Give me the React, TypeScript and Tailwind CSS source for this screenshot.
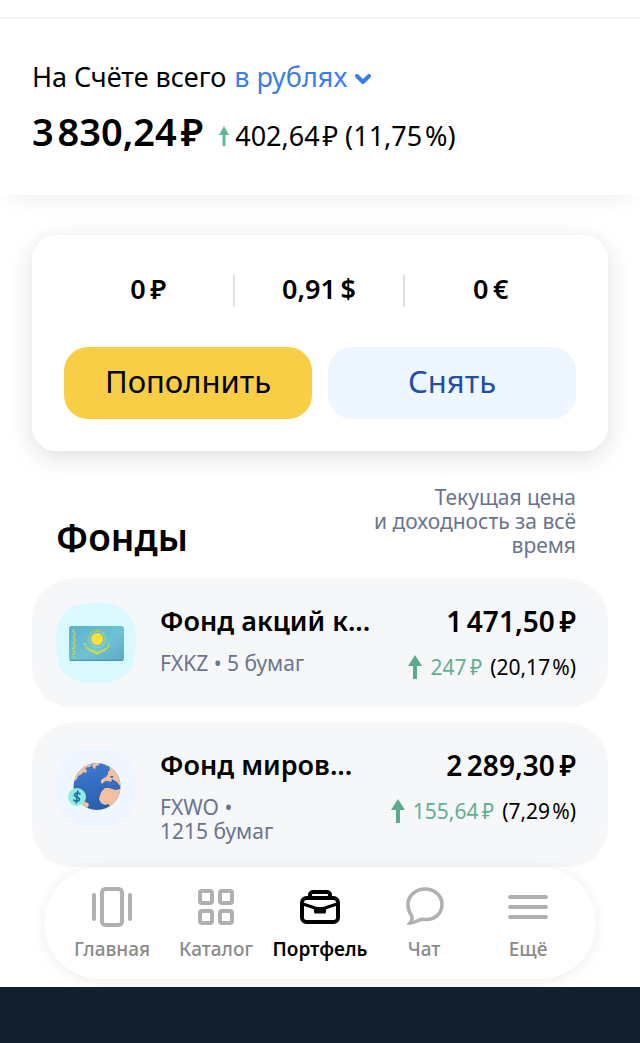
import { ReactNode, useState } from "react";
import clsx from "clsx";

type Fund = {
  name: string;
  ticker: string;
  amount: string;
  price: string;
  profit: string;
  percent: string;
  icon: ReactNode;
};

const ArrowUp = ({ className }: { className?: string }) => (
  <svg viewBox="0 0 14 24" fill="currentColor" className={className}>
    <path d="M7 0 14 11H9V24H5V11H0Z" />
  </svg>
);

const ArrowUpThin = ({ className }: { className?: string }) => (
  <svg viewBox="0 0 10 20" fill="currentColor" className={className}>
    <path d="M5 0 10 9H6.500V20H3.500V9H0Z" />
  </svg>
);

const FlagIcon = () => (
  <svg viewBox="0 0 80 80" className="h-20 w-20 shrink-0">
    <defs>
      <linearGradient id="flag" x1="0" y1="0" x2="1" y2="1">
        <stop offset="0" stopColor="#5cb0c8" />
        <stop offset="0.55" stopColor="#6fc2d5" />
        <stop offset="1" stopColor="#5aaac4" />
      </linearGradient>
    </defs>
    <path
      d="M40 0C69 0 80 11 80 40S69 80 40 80 0 69 0 40 11 0 40 0Z"
      fill="#d9f9ff"
    />
    <rect x="13" y="23" width="55" height="35" rx="2.5" fill="url(#flag)" />
    <path d="M14 57.4h53" stroke="#4b91ad" strokeWidth="1" />
    <path
      d="M18 26v29M16.5 28l3 3-3 3 3 3-3 3 3 3-3 3 3 3-3 3"
      stroke="#c6d94a"
      strokeWidth="1.2"
      strokeDasharray="2 1"
      fill="none"
    />
    <circle
      cx="41"
      cy="36"
      r="8.3"
      fill="none"
      stroke="#c3d957"
      strokeWidth="2.2"
      strokeDasharray="0.8 1.2"
    />
    <circle cx="41" cy="36" r="6" fill="#fce034" />
    <path
      d="M29 40c0 5 4 7 8 7.5 2 .2 3 1.500 4 3 1-1.500 2-2.800 4-3 4-.5 8-2.500 8-7.500M31 45c4 4 7 4 10 6 3-2 6-2 10-6"
      fill="none"
      stroke="#d5dc3f"
      strokeWidth="1.5"
      strokeDasharray="3 0.7"
    />
  </svg>
);

const GlobeIcon = () => (
  <svg viewBox="0 0 80 80" className="h-20 w-20 shrink-0">
    <defs>
      <linearGradient id="ocean" x1="0.3" y1="0" x2="0.6" y2="1">
        <stop offset="0" stopColor="#3d7bd2" />
        <stop offset="1" stopColor="#2b5da9" />
      </linearGradient>
      <clipPath id="globe">
        <circle cx="41" cy="39.500" r="23.500" />
      </clipPath>
    </defs>
    <path
      d="M40 0C69 0 80 11 80 40S69 80 40 80 0 69 0 40 11 0 40 0Z"
      fill="#eff6ff"
    />
    <circle cx="41" cy="39.500" r="23.500" fill="url(#ocean)" />
    <g clipPath="url(#globe)" fill="#f4c1a0">
      <path d="M14 38 21 32l1-3 4-2 1-2 3 1 1-3-2-1 2-2 3 0 2-3-4-3H22L13 26Z" />
      <path d="m36 18 4-3 4 0-1 3-3 1-1 3-2-1Z" />
      <path d="m48 15 2 4 3 0 1 4-2 2 0 3-3 0-1 3-3 2 0 3 3 1 3-3 4 1 1-3 5 3 3 4 0 3-4 1-4-1-3-1-4 0-3 3-2 4-1 4 2 4 4 2 3-1 2 2 0 3 1 3-1 4 2 4 8-2 9-13 2-19-7-14-10-8Z" />
      <path d="m27 54 5 2 1 2-3 5-5-4Z" />
      <path d="m47 36 2-2 3 0 3 2 4-1 1 3-5 0-2 1-3-2-3 0Z" fill="#3973c7" />
      <path d="m48 25 2 0 1 4-2 2-2-3ZM54 29l3 0 0 2-2 0Z" fill="#3973c7" />
    </g>
    <circle cx="21" cy="50" r="9" fill="#8fede1" />
    <path
      d="M24 47c-1-1.300-5-1.500-5.500.6-.5 2.700 5.300 2.200 5 4.900-.3 2.300-4.600 2-5.800.5M21.700 44 20.300 56"
      fill="none"
      stroke="#2467a5"
      strokeWidth="1.600"
      strokeLinecap="round"
    />
  </svg>
);

const HomeIcon = () => (
  <>
    <rect x="10" y="2" width="20" height="36" rx="3.500" />
    <path d="M2 8v24M38 8v24" />
  </>
);

const CatalogIcon = () => (
  <>
    <rect x="4" y="4" width="12" height="12" rx="2" />
    <rect x="24" y="4" width="12" height="12" rx="2" />
    <rect x="4" y="24" width="12" height="12" rx="2" />
    <rect x="24" y="24" width="12" height="12" rx="2" />
  </>
);

const PortfolioIcon = () => (
  <>
    <path d="M10 10V8a3 3 0 0 1 3-3h14a3 3 0 0 1 3 3v2" />
    <rect x="2" y="11" width="36" height="24" rx="4.500" />
    <path d="m3 17 12 4q5 1.500 10 0l12-4" strokeWidth="3" />
    <path
      d="M14 20.500h12V25a1.500 1.500 0 0 1-1.500 1.500h-9A1.500 1.500 0 0 1 14 25Z"
      fill="currentColor"
      stroke="none"
    />
  </>
);

const ChatIcon = () => (
  <path
    d="M21 2C30.500 2 38 8.500 38 17.500S31 32.500 22 32.500c-2 0-3-.5-5 0-3 .8-6 3-11 3.500 2-3 3-5 1.500-7.500C5 25 4 21.500 4 17.500 4 8.500 12 2 21 2Z"
    strokeWidth="3.500"
    strokeLinejoin="miter"
  />
);

const MenuIcon = () => <path d="M2 10h36M2 20h36M2 30h36" />;

const balances = ["0\u2009₽", "0,91\u2009$", "0\u2009€"];

const funds: Fund[] = [
  {
    name: "Фонд акций к...",
    ticker: "FXKZ •",
    amount: "5 бумаг",
    price: "1\u2009471,50\u2009₽",
    profit: "247\u2009₽",
    percent: "(20,17\u200A%)",
    icon: <FlagIcon />,
  },
  {
    name: "Фонд миров...",
    ticker: "FXWO •",
    amount: "1215 бумаг",
    price: "2\u2009289,30\u2009₽",
    profit: "155,64\u2009₽",
    percent: "(7,29\u200A%)",
    icon: <GlobeIcon />,
  },
];

const tabs = [
  { label: "Главная", icon: <HomeIcon /> },
  { label: "Каталог", icon: <CatalogIcon /> },
  { label: "Портфель", icon: <PortfolioIcon /> },
  { label: "Чат", icon: <ChatIcon /> },
  { label: "Ещё", icon: <MenuIcon /> },
];

const Header = () => (
  <header className="border-t-2 border-[#f4f4f4] bg-white px-8 py-10 shadow-[0_16px_20px_-12px_rgba(0,0,0,0.07)]">
    <div className="flex items-center gap-2 text-[27px] leading-9">
      <span>На Счёте всего</span>
      <button className="flex cursor-pointer items-center gap-2 text-[#3b7de9]">
        в рублях
        <svg
          viewBox="0 0 16 10"
          className="mt-1 h-[10px] w-4"
          fill="none"
          stroke="currentColor"
          strokeWidth="4"
          strokeLinecap="round"
          strokeLinejoin="round"
        >
          <path d="m2 2 6 6 6-6" />
        </svg>
      </button>
    </div>
    <div className="mt-3 flex h-12 items-baseline leading-12">
      <span className="text-[38px] font-semibold">
        3{"\u200A"}830,24{"\u200A"}₽
      </span>
      <ArrowUpThin className="ml-4 h-5 w-[10px] text-[#5fb896]" />
      <span className="ml-1.5 text-[27px]">
        402,64{"\u200A"}₽ (11,75{"\u200A"}%)
      </span>
    </div>
  </header>
);

const BalanceCard = () => (
  <section className="mx-8 mt-10 rounded-3xl bg-white px-8 pt-10 pb-8 shadow-[0_6px_24px_rgba(0,0,0,0.13)]">
    <div className="grid grid-cols-3 divide-x-2 divide-[#dce1e6]">
      {balances.map((item) => (
        <div
          key={item}
          className="pb-1 text-center text-[27px] leading-7 font-semibold"
        >
          {item}
        </div>
      ))}
    </div>
    <div className="mt-10 grid grid-cols-2 gap-4 text-[31px]">
      <button className="h-18 cursor-pointer rounded-3xl bg-[#f7ce46] pb-1">
        Пополнить
      </button>
      <button className="h-18 cursor-pointer rounded-3xl bg-[#eef6ff] pb-1 text-[#2350a5]">
        Снять
      </button>
    </div>
  </section>
);

const FundCard = ({ fund }: { fund: Fund }) => (
  <li className="flex items-start rounded-[40px] bg-[#f6f7f9] py-6 pr-8 pl-6">
    {fund.icon}
    <div className="ml-6 min-w-0 flex-1">
      <h3 className="truncate text-[27px] leading-9 font-semibold">
        {fund.name}
      </h3>
      <p className="mt-3 max-w-40 text-[21px] leading-6 text-[#69758c]">
        {fund.ticker} <span className="inline-block">{fund.amount}</span>
      </p>
    </div>
    <div className="shrink-0 text-right">
      <p className="text-[28px] leading-9 font-semibold">{fund.price}</p>
      <p className="mt-4 flex items-center justify-end gap-2 text-[21px] leading-6">
        <ArrowUp className="h-6 w-[14px] text-[#5caa8d]" />
        <span className="text-[#5fb092]">{fund.profit}</span>
        <span>{fund.percent}</span>
      </p>
    </div>
  </li>
);

const TabBar = () => {
  const [active, setActive] = useState("Портфель");

  return (
    <nav className="mx-11 mb-2 grid grid-cols-5 rounded-full bg-white px-4 pt-5 pb-[18px] shadow-[0_2px_16px_rgba(0,0,0,0.07)]">
      {tabs.map(({ label, icon }) => (
        <button
          key={label}
          onClick={() => setActive(label)}
          className="flex cursor-pointer flex-col items-center"
        >
          <svg
            viewBox="0 0 40 40"
            fill="none"
            stroke="currentColor"
            strokeWidth="4"
            strokeLinecap="round"
            strokeLinejoin="round"
            className={clsx(
              "h-10 w-10",
              active === label ? "text-black" : "text-[#b0b0b0]",
            )}
          >
            {icon}
          </svg>
          <span
            className={clsx(
              "mt-[10px] text-[19px] leading-6",
              active === label
                ? "font-semibold text-black"
                : "font-medium text-[#8a8a8a]",
            )}
          >
            {label}
          </span>
        </button>
      ))}
    </nav>
  );
};

const App = () => {
  return (
    <div className="flex min-h-screen flex-col bg-white pt-[17px] font-['Noto_Sans',sans-serif] text-black">
      <Header />
      <main>
        <BalanceCard />
        <section className="px-8 pt-[34px]">
          <div className="flex items-end justify-between pr-8 pl-6">
            <h2 className="text-[37px] leading-10 font-semibold">Фонды</h2>
            <p className="text-right text-[21px] leading-6 text-[#69758c]">
              Текущая цена
              <br />
              и доходность за всё
              <br />
              время
            </p>
          </div>
          <ul className="mt-[22px] flex flex-col gap-4">
            {funds.map((fund) => (
              <FundCard key={fund.ticker} fund={fund} />
            ))}
          </ul>
        </section>
      </main>
      <TabBar />
      <footer className="min-h-14 flex-1 bg-[#121f2d]" />
    </div>
  );
};

export default App;
